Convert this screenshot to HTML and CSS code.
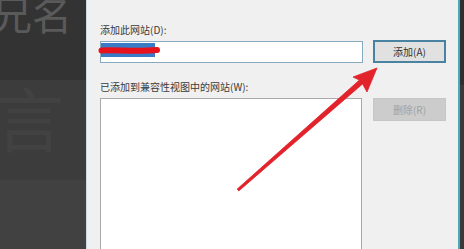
FILE: index.html
```html
<!DOCTYPE html>
<html lang="zh-CN">
<head>
<meta charset="utf-8">
<title>兼容性视图设置</title>
<link rel="stylesheet" href="styles.css">
</head>
<body>
<div class="screen">
  <div class="bg-left">
    <div class="bg-top"><span class="ghost ghost-a">兄名</span></div>
    <div class="bg-mid"><span class="ghost ghost-b">言</span></div>
    <div class="bg-bot"></div>
  </div>
  <div class="dialog">
    <div class="form">
      <label class="lbl r1">添加此网站(D):</label>
      <div class="input"><span class="sel"></span></div>
      <button class="btn add">添加(A)</button>
      <label class="lbl r3">已添加到兼容性视图中的网站(W):</label>
      <div class="list"></div>
      <button class="btn del" disabled>删除(R)</button>
    </div>
  </div>
  <div class="bg-right"><div class="br-top"></div><div class="br-bot"></div></div>
  <svg class="annot" width="464" height="249" viewBox="0 0 464 249" xmlns="http://www.w3.org/2000/svg">
    <path d="M101.5 50.5 C 115 49.5, 135 52, 157 50" fill="none" stroke="#e8121c" stroke-width="6" stroke-linecap="round"/>
    <polygon points="237.2,189.1 238.8,190.9 362.6,83.9 367,92 377,68 353,77 359.4,80.1" fill="#e2232c" stroke="#e2232c" stroke-width="0.8" stroke-linejoin="round"/>
  </svg>
</div>
</body>
</html>
```

FILE: styles.css
```css
html, body {
  margin: 0;
  padding: 0;
}
body {
  width: 464px;
  height: 249px;
  overflow: hidden;
  font-family: "Noto Sans CJK SC", "Liberation Sans", sans-serif;
}
.screen {
  position: relative;
  display: flex;
  width: 464px;
  height: 249px;
  overflow: hidden;
}
.bg-left {
  width: 86px;
  flex: none;
  display: flex;
  flex-direction: column;
}
.bg-top {
  height: 80px;
  background: #333333;
  overflow: hidden;
}
.bg-mid {
  height: 100px;
  background: #3c3c3c;
  overflow: hidden;
}
.bg-bot {
  flex: 1;
  background: #414141;
}
.ghost {
  display: block;
  white-space: nowrap;
  line-height: 1;
}
.ghost-a {
  font-size: 40px;
  color: #5a5a5a;
  margin-top: -7px;
  margin-left: -8px;
}
.ghost-b {
  font-size: 70px;
  color: #424242;
  margin-top: 2px;
  margin-left: -6px;
}
.dialog {
  flex: none;
  width: 374px;
  box-sizing: border-box;
  background: #f0f0f0;
  border-left: 1px solid #c9dbe6;
  border-right: 2px solid #4fa6b6;
  padding-left: 13px;
}
.form {
  display: grid;
  grid-template-columns: 263px 73px;
  grid-template-rows: 40px 23px 35px 160px;
  column-gap: 10px;
  height: 249px;
  overflow: hidden;
}
.lbl {
  grid-column: 1;
  align-self: end;
  font-size: 10px;
  line-height: 12px;
  color: #3a3a3a;
  white-space: nowrap;
}
.r1 {
  grid-row: 1;
  padding-bottom: 4px;
}
.r3 {
  grid-row: 3;
  padding-bottom: 5px;
}
.input {
  grid-row: 2;
  grid-column: 1;
  height: 22px;
  margin-top: 1px;
  box-sizing: border-box;
  border: 1px solid #86aac0;
  background: #ffffff;
}
.sel {
  display: block;
  width: 54px;
  height: 14px;
  margin-top: 1px;
  background: #3a7bc8;
}
.btn {
  font-family: "Noto Sans CJK SC", "Liberation Sans", sans-serif;
  font-size: 10px;
  line-height: 12px;
  padding: 0;
  margin: 0;
  height: 23px;
  box-sizing: border-box;
  grid-column: 2;
}
.add {
  grid-row: 2;
  background: #e1e1e1;
  border: 2px solid #4a82a2;
  color: #333333;
}
.del {
  grid-row: 4;
  align-self: start;
  background: #cccccc;
  border: 1px solid #c6c6c6;
  color: #a2a2a2;
}
.list {
  grid-row: 4;
  grid-column: 1;
  width: 262px;
  height: 200px;
  box-sizing: border-box;
  border: 1px solid #a9a9a9;
  background: #ffffff;
}
.bg-right {
  flex: 1;
  display: flex;
  flex-direction: column;
}
.br-top {
  height: 85px;
  background: #2f2f2f;
}
.br-bot {
  flex: 1;
  background: #3a3a3a;
}
.annot {
  position: absolute;
  left: 0;
  top: 0;
  pointer-events: none;
}
```
